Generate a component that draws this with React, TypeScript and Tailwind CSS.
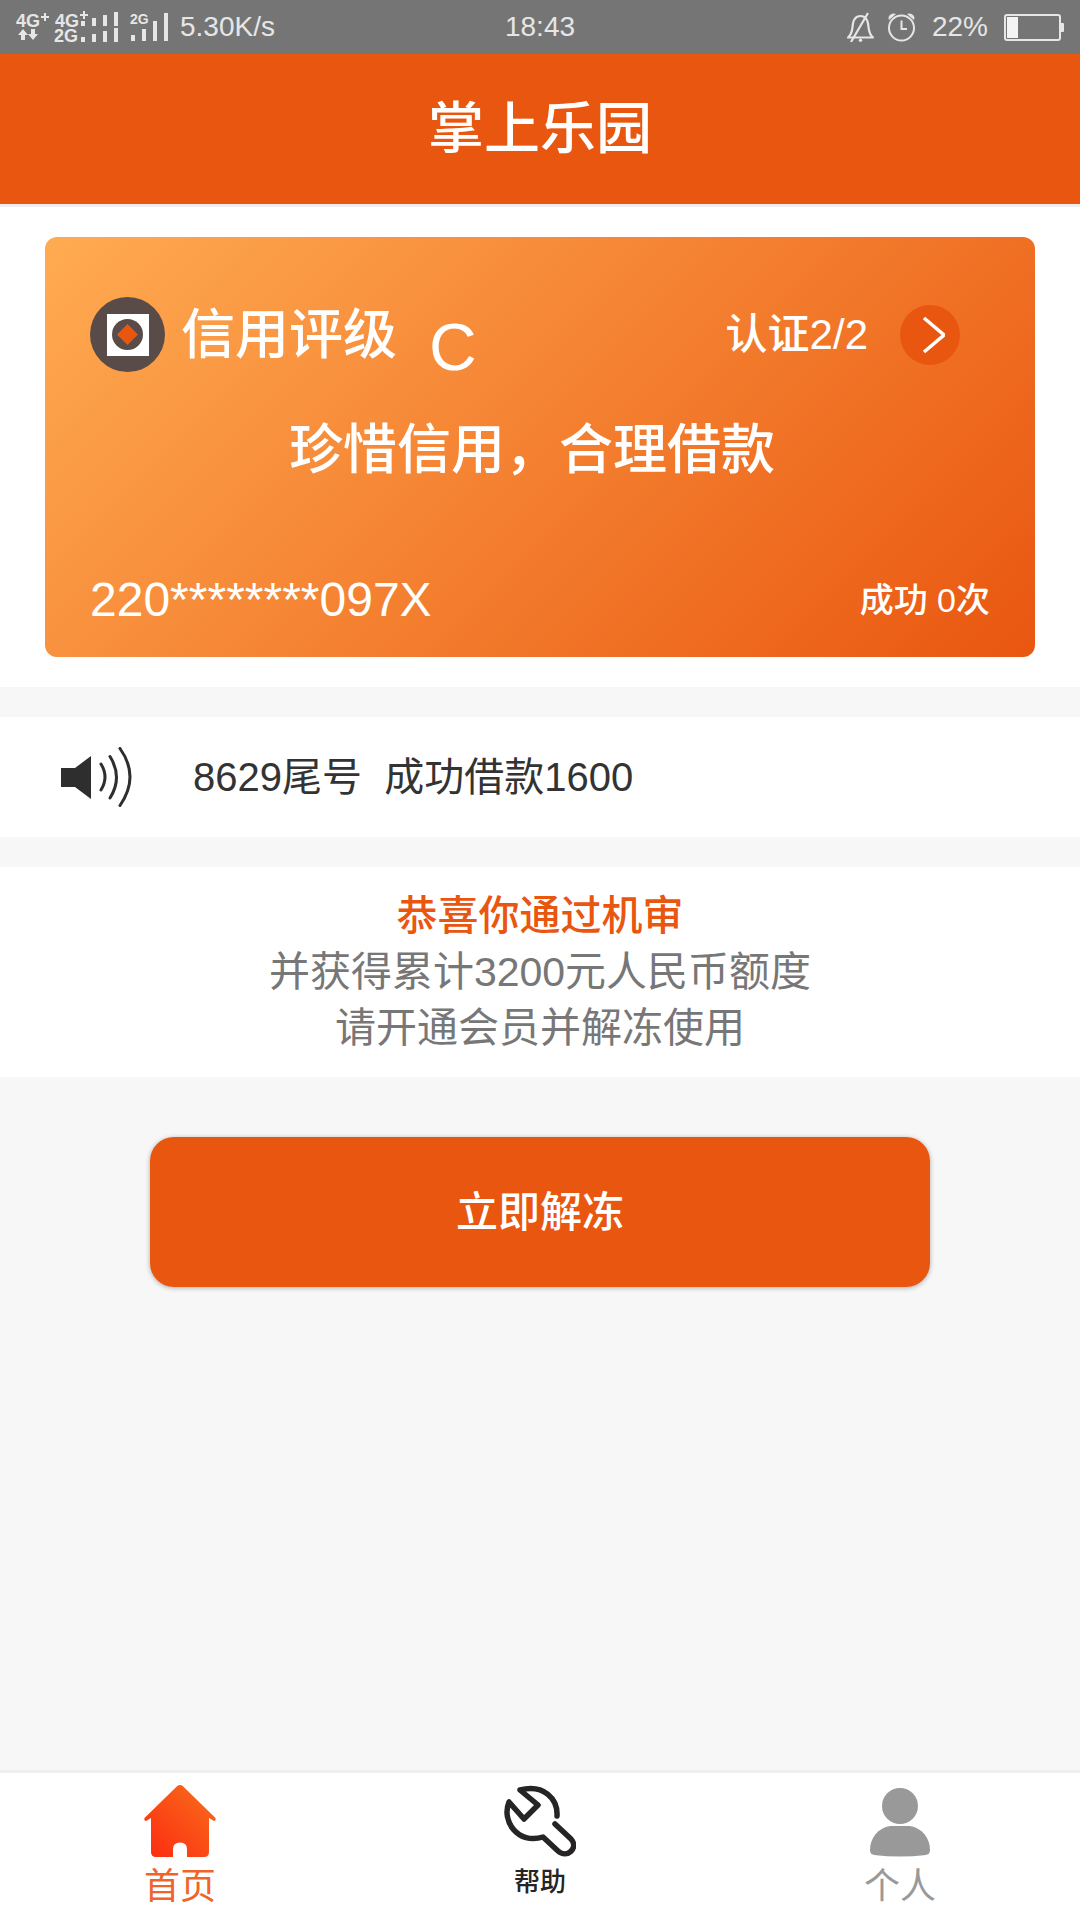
import type {ReactNode} from "react";

function SignalIcon() {
    return (
        <svg width="156" height="36" viewBox="0 0 156 36" fill="#e6e6e6" fontFamily="Liberation Sans, sans-serif"
             fontWeight="bold" aria-hidden="true">
            <text x="0" y="18" fontSize="18">4G</text>
            <path d="M25 8h8M29 4v8" stroke="#e6e6e6" strokeWidth="2"/>
            <path d="M7 20l5 6h-3v5h-4v-5h-3zM17 31l5-6h-3v-5h-4v5h-3z"/>
            <text x="39" y="18" fontSize="18">4G</text>
            <path d="M64 6h8M68 2v8" stroke="#e6e6e6" strokeWidth="2"/>
            <text x="38" y="33" fontSize="18">2G</text>
            <path d="M65 12h4v5h-4zM76 9h4v8h-4zM87 6h4v11h-4zM98 3h4v14h-4z"/>
            <path d="M65 28h4v5h-4zM76 25h4v8h-4zM87 22h4v11h-4zM98 19h4v14h-4z"/>
            <text x="114" y="15" fontSize="14">2G</text>
            <path d="M115 26h4v6h-4zM126 20h4v12h-4zM137 12h4v20h-4zM148 4h4v28h-4z"/>
        </svg>
    )
}

function BellOffIcon() {
    return (
        <svg width="29" height="30" viewBox="0 0 29 30" fill="none" stroke="#e6e6e6" strokeWidth="2.2" aria-hidden="true">
            <path d="M2 25.500h25c-5-4-4-9-5-14C21 6 18 4 14.500 4S8 6 7 11.500c-1 5 0 10-5 14z" strokeLinejoin="round"/>
            <path d="M22 1L5 30"/>
            <circle cx="14.500" cy="28.300" r="1.700" fill="#e6e6e6" stroke="none"/>
        </svg>
    )
}

function AlarmIcon() {
    return (
        <svg width="29" height="30" viewBox="0 0 29 30" fill="none" stroke="#e6e6e6" strokeWidth="2" aria-hidden="true">
            <circle cx="14.500" cy="16" r="12.500"/>
            <path d="M14.500 8.500V17h5.500"/>
            <path d="M2 8C0 4 5 0 9 2zM27 8c2-4-3-8-7-6z" fill="#e6e6e6" stroke="none"/>
        </svg>
    )
}

function BatteryIcon() {
    return (
        <svg width="60" height="27" viewBox="0 0 60 27" aria-hidden="true">
            <rect x="1" y="1" width="55" height="25" rx="2" fill="none" stroke="#e6e6e6" strokeWidth="2"/>
            <path d="M3 3h11v21H3z" fill="#f4f4f4"/>
            <path d="M57 9h2q1 0 1 1v7q0 1-1 1h-2z" fill="#e6e6e6"/>
        </svg>
    )
}

function CoinIcon() {
    return (
        <svg width="75" height="75" viewBox="0 0 75 75" aria-hidden="true">
            <circle cx="37.500" cy="37.500" r="37.500" fill="#594b48"/>
            <path d="M17 17h42v42H17z" fill="#fff"/>
            <circle cx="37.500" cy="37.500" r="15.500" fill="#594b48"/>
            <path d="M37.500 27l10.500 10.500L37.500 48 27 37.500z" fill="#e9560f"/>
        </svg>
    )
}

function SpeakerIcon() {
    return (
        <svg width="72" height="60" viewBox="0 0 72 60" fill="none" stroke="#2e2e2e" strokeLinecap="round"
             aria-hidden="true">
            <path d="M0 21h14l16-12v43L14 40H0z" fill="#2e2e2e" stroke="none"/>
            <path d="M40 17q8 13 0 26" strokeWidth="3"/>
            <path d="M49 9.500q13 21 0 41.500" strokeWidth="3"/>
            <path d="M59 1.500q20 28 0 57" strokeWidth="3"/>
        </svg>
    )
}

function HomeIcon() {
    return (
        <svg width="72" height="72" viewBox="0 0 72 72" aria-hidden="true">
            <defs>
                <linearGradient id="home" x1="0" y1="1" x2="1" y2="0">
                    <stop offset="0" stopColor="#fc2a10"/>
                    <stop offset="1" stopColor="#f9701c"/>
                </linearGradient>
            </defs>
            <path fill="url(#home)"
                  d="M33 1.200q3-2.400 6 0L71.500 33q.8 3-1.500 3l-5-3v34q0 5-5 5H43V64q0-6.500-7-6.500T29 64v8H12q-5 0-5-5V33l-5 3q-2.300 0-1.500-3z"/>
        </svg>
    )
}

function WrenchIcon() {
    return (
        <svg width="72" height="72" viewBox="0 0 72 72" fill="none" stroke="#262424" strokeWidth="5.500"
             strokeLinecap="round" strokeLinejoin="round" aria-hidden="true">
            <path d="M53 31C54 14 40-1 16 5l18 15-14 14L5 17C-3 36 14 60 39 52l15 14c9 8 21-3 13-12L51 39"/>
        </svg>
    )
}

function PersonIcon() {
    return (
        <svg width="60" height="69" viewBox="0 0 60 69" fill="#999" aria-hidden="true">
            <circle cx="30" cy="18" r="18"/>
            <path d="M20 38h20c12 2 20 12 20 24q0 4-4 5-26 3-52 0-4-1-4-5C0 50 8 40 20 38z"/>
        </svg>
    )
}

function NavItem({icon, children}: { icon: ReactNode, children: ReactNode }) {
    return (
        <a href="#" className="flex flex-1 flex-col items-center">
            <span className="flex h-[84px] items-end">{icon}</span>
            {children}
        </a>
    )
}

export default function App() {
    return (
        <div className="flex min-h-screen flex-col bg-[#f7f7f7] font-['Liberation_Sans','Noto_Sans_CJK_SC',sans-serif]">
            {/* Status bar */}
            <div className="grid h-[54px] grid-cols-[1fr_auto_1fr] items-center bg-[#757575] pr-4 pl-4 text-[28px] leading-none text-[#e6e6e6]">
                <div className="flex items-center gap-2">
                    <SignalIcon/>
                    <span>5.30K/s</span>
                </div>
                <span>18:43</span>
                <div className="flex items-center justify-end">
                    <BellOffIcon/>
                    <span className="ml-3"><AlarmIcon/></span>
                    <span className="mr-4 ml-4">22%</span>
                    <BatteryIcon/>
                </div>
            </div>

            <header className="flex h-[153px] items-center justify-center border-b-[3px] border-[#eee] bg-[#e9560f] bg-clip-padding">
                <h1 className="text-[56px] leading-none font-medium text-white">掌上乐园</h1>
            </header>

            {/* Credit card */}
            <section className="bg-white px-[45px] py-[30px]">
                <div className="rounded-xl bg-[linear-gradient(135deg,#ffab52,#e9560f)] pt-[60px] pb-[27px] font-medium text-white">
                    <div className="flex h-[75px] items-center pr-[75px] pl-[45px]">
                        <CoinIcon/>
                        <span className="ml-4 text-[54px] leading-none">信用评级</span>
                        <span className="ml-8 self-end text-[66px] leading-[50px] font-normal">C</span>
                        <span className="ml-auto text-[42px] leading-none">认证2/2</span>
                        <button type="button" aria-label="认证"
                                className="ml-8 flex size-[60px] items-center justify-center rounded-full bg-[#e9560f]">
                            <svg width="30" height="40" viewBox="0 0 30 40" fill="none" stroke="#fff" strokeWidth="3.500"
                                 aria-hidden="true">
                                <path d="M9 3l20 17L9 37"/>
                            </svg>
                        </button>
                    </div>
                    <p className="mt-12 pr-4 text-center text-[54px] leading-[60px]">珍惜信用，合理借款</p>
                    <div className="mt-[90px] flex h-[60px] items-center justify-between px-[45px]">
                        <span className="text-[48px] leading-none">220********097X</span>
                        <span className="text-[34px] leading-none">成功 0次</span>
                    </div>
                </div>
            </section>

            {/* Notice */}
            <section className="mt-[30px] flex h-[120px] items-center bg-white pl-[61px]">
                <SpeakerIcon/>
                <p className="ml-[60px] text-[40px] leading-none whitespace-pre text-[#333]">8629尾号  成功借款1600</p>
            </section>

            <section className="mt-[30px] bg-white py-[21px] text-center text-[41px] leading-[56px] text-[#777]">
                <p className="font-medium text-[#e9560f]">恭喜你通过机审</p>
                <p>并获得累计3200元人民币额度</p>
                <p>请开通会员并解冻使用</p>
            </section>

            <div className="px-[150px] pt-[60px]">
                <button type="button"
                        className="h-[150px] w-full rounded-3xl bg-[#e9560f] text-[42px] font-medium text-white shadow-[0_1px_5px_rgba(0,0,0,0.3)]">
                    立即解冻
                </button>
            </div>

            {/* Bottom tabs */}
            <nav className="mt-auto flex h-[150px] border-t-[3px] border-[#eee] bg-white leading-none">
                <NavItem icon={<HomeIcon/>}>
                    <span className="mt-3 text-[36px] text-[#f0642a]">首页</span>
                </NavItem>
                <NavItem icon={<WrenchIcon/>}>
                    <span className="mt-3 text-[26px] font-medium text-[#262424]">帮助</span>
                </NavItem>
                <NavItem icon={<PersonIcon/>}>
                    <span className="mt-3 text-[36px] text-[#999]">个人</span>
                </NavItem>
            </nav>
        </div>
    );
}
